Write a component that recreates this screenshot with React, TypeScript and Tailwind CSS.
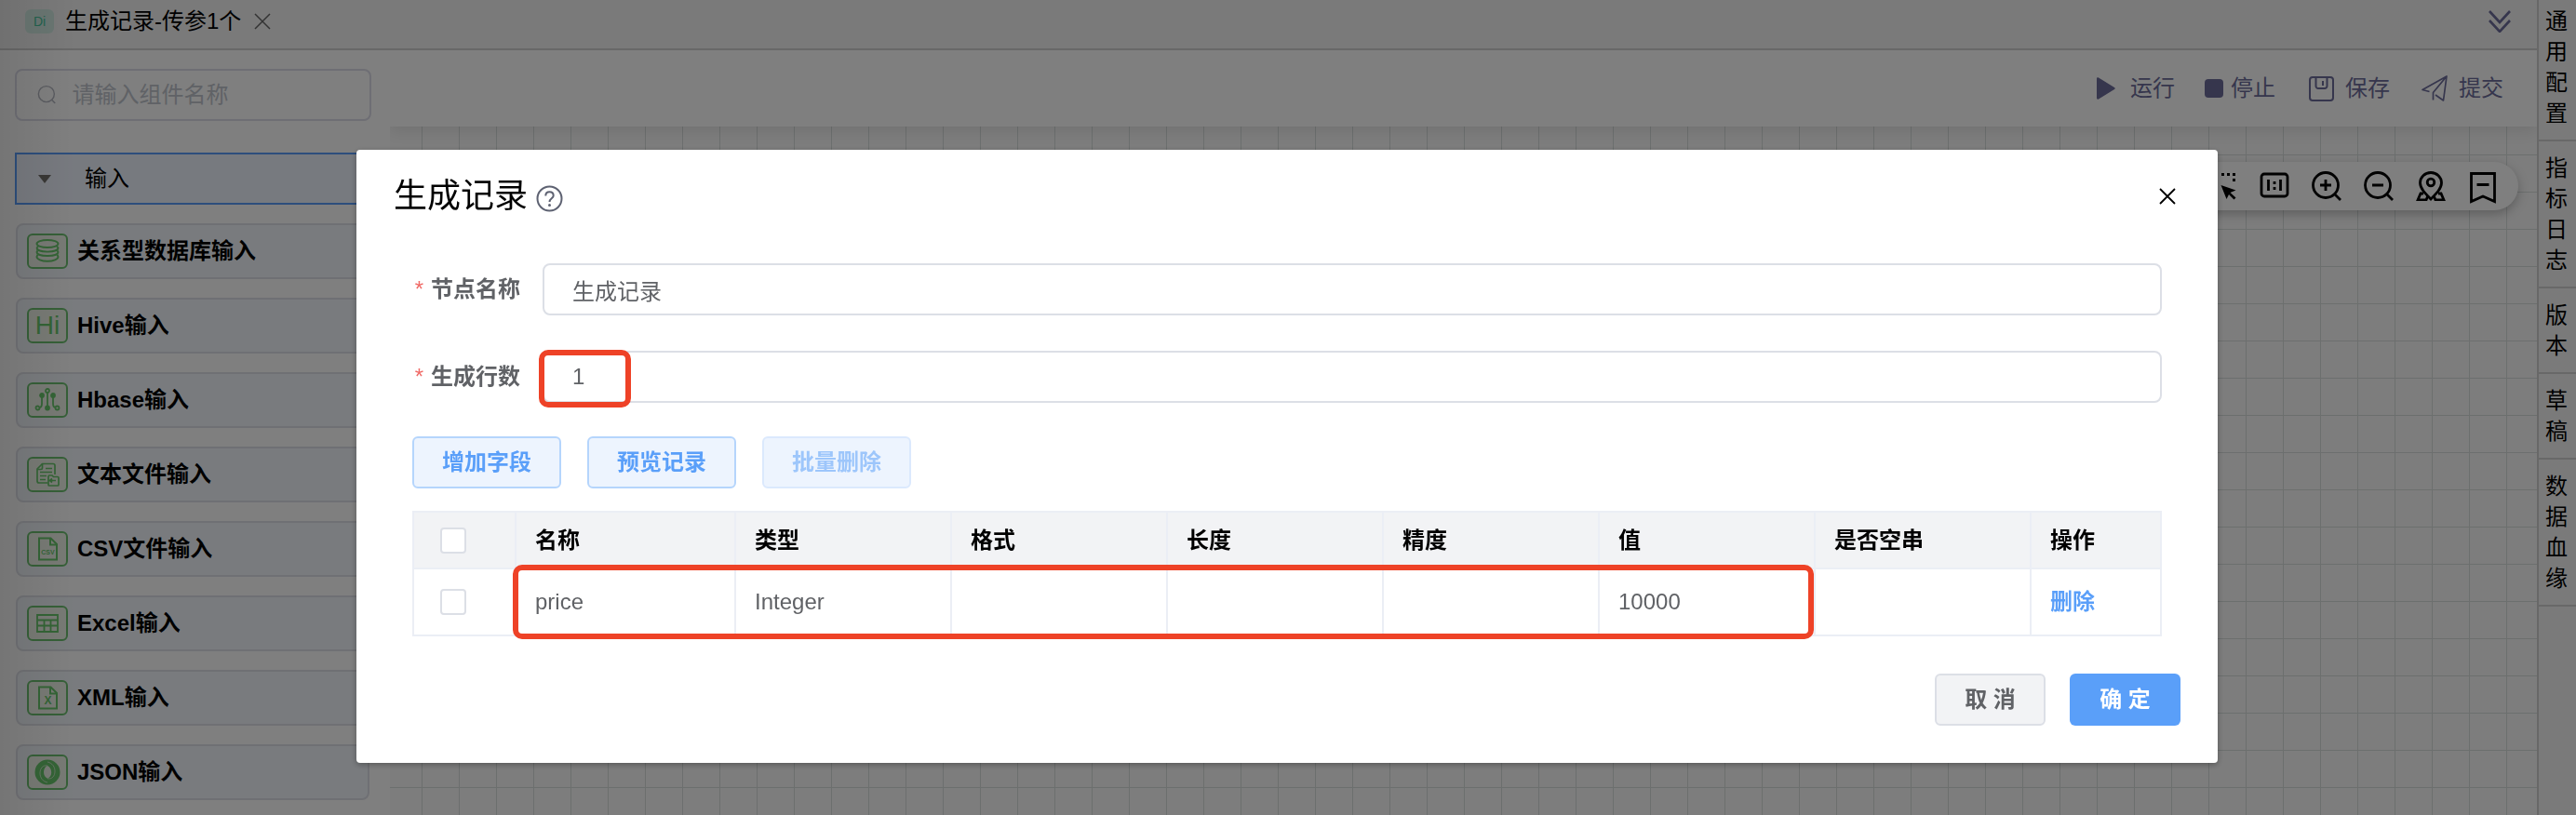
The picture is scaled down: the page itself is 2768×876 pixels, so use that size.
import type { ReactNode } from "react";
import { clsx } from "clsx";

const green = "#68c86c";

const DatabaseIcon = () => (
  <svg className="size-7" viewBox="0 0 28 28" fill="none" stroke={green} strokeWidth="1.9">
    <ellipse cx="14" cy="6" rx="11.5" ry="4" />
    <path d="M2.5 10.5C2.5 13 7.6 14.6 14 14.6S25.5 13 25.5 10.5L24 8.5M2.5 10.5L4 8.5" />
    <path d="M3.5 13.2L2.5 15C2.5 17.5 7.6 19 14 19S25.5 17.5 25.5 15L24.5 13.2" />
    <path d="M3.5 17.6L2.5 20C2.5 22.5 7.6 24.8 14 24.8S25.5 22.5 25.5 20L24.5 17.6" />
  </svg>
);

const HiveIcon = () => (
  <span className="text-[28px] leading-7 text-[#68c86c]">Hi</span>
);

const HbaseIcon = () => (
  <svg className="size-7" viewBox="0 0 28 28" fill="none" stroke={green} strokeWidth="1.8">
    <circle cx="14" cy="4" r="2" />
    <path d="M14 6v15M8 9v9c0 3-1 4-3 4M20 9v9c0 3 1 4 3 4" />
    <circle cx="8" cy="9" r="2" fill={green} />
    <circle cx="20" cy="9" r="2" fill={green} />
    <circle cx="14" cy="22.5" r="2" fill={green} />
    <circle cx="3.5" cy="22.5" r="2" />
    <circle cx="24.5" cy="22.5" r="2" />
  </svg>
);

const TextFileIcon = () => (
  <svg className="size-7" viewBox="0 0 28 28" fill="none" stroke={green} strokeWidth="1.7">
    <path d="M14 23H5a2 2 0 0 1-2-2V8l5.5-5.5H20a2 2 0 0 1 2 2V14" />
    <path d="M3 8.5h4a1.5 1.5 0 0 0 1.5-1.5V2.5" />
    <path d="M12 7.5h7M6 11.5h13M6 15.500h7M6 19.500h6" />
    <path d="M16 15h3l1.5 1.5H25a1 1 0 0 1 1 1V25a1 1 0 0 1-1 1H16a1 1 0 0 1-1-1V16a1 1 0 0 1 1-1Z" />
    <path d="M23 20.500h-6M19 18.500l-2.500 2 2.500 2" />
  </svg>
);

const FileIcon = ({ label, size }: { label: string; size: number }) => (
  <svg className="size-7" viewBox="0 0 28 28" fill="none" stroke={green} strokeWidth="2">
    <path d="M5 2.500h12.500L24 9v16.500H5Z" />
    <path d="M17 3v6.500h6.500" />
    <text
      x="14.5"
      y={size > 10 ? 21 : 19.5}
      fontSize={size}
      fontWeight="bold"
      textAnchor="middle"
      fill={green}
      stroke="none"
    >
      {label}
    </text>
  </svg>
);

const TableIcon = () => (
  <svg className="size-7" viewBox="0 0 28 28" fill="none" stroke={green} strokeWidth="1.8">
    <path d="M3 5h22v18H3ZM3 10.500h22M3 16.500h22M10.500 10.500V23M17.500 10.500V23" />
  </svg>
);

const JsonIcon = () => (
  <svg className="size-7" viewBox="0 0 28 28" fill={green}>
    <path
      fillRule="evenodd"
      d="M14 .5a13.500 13.500 0 1 0 0 27 13.500 13.500 0 0 0 0-27ZM14 7c2.800 1.500 4.200 4 4.200 7.200 0 3.200-1.500 5.600-4.200 6.600-2.600-1.300-4-3.700-4-6.800S11.400 8 14 7Z"
    />
    <path
      d="M14 7C9 6 6 10 6 15c0 5 3 9 8 10M14 20.800c5 1 8-2.800 8-7.800S19 4 14 3"
      fill="none"
      stroke="#eef4e6"
      strokeWidth=".7"
    />
  </svg>
);

const components: { name: string; icon: ReactNode }[] = [
  { name: "关系型数据库输入", icon: <DatabaseIcon /> },
  { name: "Hive输入", icon: <HiveIcon /> },
  { name: "Hbase输入", icon: <HbaseIcon /> },
  { name: "文本文件输入", icon: <TextFileIcon /> },
  { name: "CSV文件输入", icon: <FileIcon label="CSV" size={7} /> },
  { name: "Excel输入", icon: <TableIcon /> },
  { name: "XML输入", icon: <FileIcon label="X" size={12} /> },
  { name: "JSON输入", icon: <JsonIcon /> },
];

const sideTabs = ["通用配置", "指标日志", "版本", "草稿", "数据血缘"];

const columns = ["名称", "类型", "格式", "长度", "精度", "值", "是否空串"];

const rows = [["price", "Integer", "", "", "", "10000", ""]];

const TabBar = () => (
  <header className="flex h-[54px] items-center border-b-2 border-[#d0d0d0] bg-[#f4f4f4] pb-[6px] pl-[27px] pr-7">
    <span className="flex h-[26px] w-[31px] items-center justify-center rounded-md bg-[#d3ece4] text-sm text-[#46c49c]">
      Di
    </span>
    <h1 className="ml-3 text-2xl leading-8 text-black">生成记录-传参1个</h1>
    <button aria-label="关闭标签" className="ml-[14px]">
      <svg className="size-[18px]" viewBox="0 0 18 18" stroke="#666" strokeWidth="1.5">
        <path d="M1 1l16 16M17 1L1 17" />
      </svg>
    </button>
    <button aria-label="展开" className="ml-auto">
      <svg className="size-6" viewBox="0 0 24 24" fill="none" stroke="#6c6c9a" strokeWidth="2.6">
        <path d="M1 1l11 12L23 1M1 11l11 12 11-12" />
      </svg>
    </button>
  </header>
);

const ComponentPanel = () => (
  <aside className="w-[419px] shrink-0 bg-white pl-4 pr-5 pt-5">
    <label className="flex h-14 items-center gap-4 rounded-lg border-2 border-[#dcdce8] pl-[22px]">
      <svg className="size-6" viewBox="0 0 24 24" fill="none" stroke="#b4b6c0" strokeWidth="1.6">
        <circle cx="11" cy="11" r="9.5" />
        <path d="M17.5 18l4 4" />
      </svg>
      <input
        type="text"
        aria-label="组件名称"
        placeholder="请输入组件名称"
        className="w-full min-w-0 bg-transparent text-2xl leading-8 outline-none placeholder:text-[#c0c4cc]"
      />
    </label>
    <button className="mt-[34px] flex h-14 w-full items-center border-2 border-[#5a9cf8] bg-[#eff4ff] pl-[23px] text-2xl leading-8 text-black">
      <svg className="h-[9px] w-[14px]" viewBox="0 0 14 9" fill="#73706b">
        <path d="M0 0h14L7 9Z" />
      </svg>
      <span className="ml-9">输入</span>
    </button>
    <ul className="ml-px mr-0.5 mt-5 flex flex-col gap-5">
      {components.map((item) => (
        <li
          key={item.name}
          className="flex h-[60px] items-center gap-[10px] rounded-lg border-2 border-[#dfe1e8] bg-[#f2f7fc] pl-[10px]"
        >
          <span className="flex h-[38px] w-11 items-center justify-center rounded-md border-2 border-[#6cc070] bg-[#f0f5ea]">
            {item.icon}
          </span>
          <span className="text-2xl leading-8 font-bold text-black">{item.name}</span>
        </li>
      ))}
    </ul>
  </aside>
);

const ActionBar = () => (
  <div className="relative z-10 flex h-[82px] shrink-0 items-center justify-end bg-white pr-9 text-2xl leading-8 text-[#6c6c9a] shadow-[0_4px_16px_rgba(0,0,0,0.1)]">
    <button className="flex items-center gap-4">
      <svg className="h-6 w-5" viewBox="0 0 20 24" fill="currentColor">
        <path d="M0 1.500C0 .3 1 0 2 .6L19 11c1 .6 1 1.400 0 2L2 23.400c-1 .6-2 .3-2-.9Z" />
      </svg>
      运行
    </button>
    <button className="ml-8 flex items-center gap-2">
      <span className="size-5 rounded-sm bg-[#6c6c9a]" />
      停止
    </button>
    <button className="ml-9 flex items-center gap-3">
      <svg className="size-[27px]" viewBox="0 0 27 27" fill="none" stroke="currentColor" strokeWidth="2">
        <rect x="1" y="1" width="25" height="25" rx="3" />
        <path d="M7.500 1v9.500a2.500 2.500 0 0 0 2.500 2.500h7a2.500 2.500 0 0 0 2.500-2.500V1M15 5v5" />
      </svg>
      保存
    </button>
    <button className="ml-[34px] flex items-center gap-3">
      <svg className="size-7" viewBox="0 0 28 28" fill="none" stroke="currentColor" strokeWidth="1.7" strokeLinejoin="round">
        <path d="M8.500 17.500L1 15.500 27 1 23.500 27 15 21M27 1L12.500 18.500V26.500" />
      </svg>
      提交
    </button>
  </div>
);

const CanvasTools = () => (
  <div className="absolute right-5 top-[38px] flex h-[52px] items-center gap-6 rounded-full bg-white px-[22px] text-black shadow-[0_4px_12px_rgba(0,0,0,0.25)]">
    <button aria-label="框选">
      <svg className="size-8" viewBox="0 0 32 32" fill="currentColor">
        <path d="M2 2h3v3H2zM8 2h3v3H8zM15 2h3v3h-3zM21 2h3v3h-3zM27 2h3v3h-3zM27 8h3v3h-3zM2 8h3v3H2zM2 14h3v3H2z" />
        <path d="M14.500 15L30.500 20.500 24.500 23 30.500 28.500 28.500 30.500 23 25 20.500 30Z" />
      </svg>
    </button>
    <button aria-label="原始比例">
      <svg className="size-8" viewBox="0 0 32 32" fill="none" stroke="currentColor" strokeWidth="2.8">
        <rect x="2" y="3" width="28" height="24" rx="3" />
        <path d="M9.500 9v12M22.500 9v12M16 11v3M16 17v3" />
      </svg>
    </button>
    <button aria-label="放大">
      <svg className="size-8" viewBox="0 0 32 32" fill="none" stroke="currentColor" strokeWidth="2.8">
        <circle cx="15" cy="15" r="13.5" />
        <path d="M24.500 24.500L31 31M9 15h12M15 9v12" />
      </svg>
    </button>
    <button aria-label="缩小">
      <svg className="size-8" viewBox="0 0 32 32" fill="none" stroke="currentColor" strokeWidth="2.8">
        <circle cx="15" cy="15" r="13.5" />
        <path d="M24.500 24.500L31 31M9 15h12" />
      </svg>
    </button>
    <button aria-label="定位">
      <svg className="size-8" viewBox="0 0 32 32" fill="none" stroke="currentColor" strokeWidth="2.8">
        <path d="M16 30C10 24 4.500 18.500 4.500 12.500a11.500 11 0 0 1 23 0C27.500 18.500 22 24 16 30Z" />
        <circle cx="16" cy="12" r="3.8" />
        <path d="M8 24H5L2 31h9l2-5M24 24h3l3 7h-9l-2-5" />
      </svg>
    </button>
    <button aria-label="书签">
      <svg className="size-8 overflow-visible" viewBox="0 0 32 32" fill="none" stroke="currentColor" strokeWidth="2.8">
        <path d="M3.500 2.500h25V32.500L16 27 3.500 32.500ZM9.500 14.500h13" />
      </svg>
    </button>
  </div>
);

const SideTabs = () => (
  <nav className="w-[42px] shrink-0 border-l-2 border-[#d0d0d0] bg-[#f5f5f5]">
    {sideTabs.map((tab, i) => (
      <button
        key={tab}
        className={clsx(
          "block w-full border-b-2 border-[#d0d0d0] pb-3 pl-[6px] pr-2 text-2xl leading-[33px] break-all text-black",
          i === 0 ? "pt-[6px]" : "pt-3"
        )}
      >
        {tab}
      </button>
    ))}
  </nav>
);

interface FieldProps {
  id: string;
  label: string;
  value: string;
  marked?: boolean;
}

const Field = ({ id, label, value, marked }: FieldProps) => (
  <div className="flex items-center">
    <label htmlFor={id} className="w-[140px] shrink-0 pr-6 text-right text-2xl leading-8 font-bold whitespace-nowrap text-[#606266]">
      <span className="mr-2 font-normal text-[#f06a66]">*</span>
      {label}
    </label>
    <div className="relative flex-1">
      <input
        id={id}
        type="text"
        defaultValue={value}
        className="block h-14 w-full rounded-lg border-2 border-[#dcdfe6] bg-white px-[30px] text-2xl leading-8 text-[#606266] outline-none"
      />
      {marked && (
        <span className="pointer-events-none absolute -left-1 -top-px h-[62px] w-[99px] rounded-[10px] border-[6px] border-[#ee4227]" />
      )}
    </div>
  </div>
);

const Checkbox = ({ label }: { label: string }) => (
  <input
    type="checkbox"
    aria-label={label}
    className="block size-7 appearance-none rounded border-2 border-[#dcdfe6] bg-white"
  />
);

const RecordTable = () => (
  <div className="relative mt-6">
    <table className="w-full table-fixed border-separate border-spacing-0 border-l-2 border-t-2 border-[#ebeef5] text-left text-2xl leading-8">
      <colgroup>
        <col className="w-[110px]" />
        <col className="w-[236px]" />
        <col span={6} />
        <col className="w-[140px]" />
      </colgroup>
      <thead>
        <tr className="h-[61px] bg-[#f2f3f5] text-black">
          <th className="border-b-2 border-r-2 border-[#ebeef5] pl-7">
            <Checkbox label="全选" />
          </th>
          {columns.map((column) => (
            <th key={column} className="border-b-2 border-r-2 border-[#ebeef5] pl-5 font-bold">
              {column}
            </th>
          ))}
          <th className="border-b-2 border-r-2 border-[#ebeef5] pl-5 font-bold">操作</th>
        </tr>
      </thead>
      <tbody>
        {rows.map((row) => (
          <tr key={row[0]} className="h-[72px] text-[#606266]">
            <td className="border-b-2 border-r-2 border-[#ebeef5] pl-7">
              <Checkbox label={row[0]} />
            </td>
            {row.map((cell, i) => (
              <td key={columns[i]} className="border-b-2 border-r-2 border-[#ebeef5] pl-5">
                {cell}
              </td>
            ))}
            <td className="border-b-2 border-r-2 border-[#ebeef5] pl-5">
              <button className="font-bold text-[#5a9ff9]">删除</button>
            </td>
          </tr>
        ))}
      </tbody>
    </table>
    <span className="pointer-events-none absolute -bottom-[3px] left-[108px] right-[374px] h-20 rounded-[10px] border-[6px] border-[#ee4227]" />
  </div>
);

const RecordDialog = () => (
  <div
    role="dialog"
    aria-label="生成记录"
    className="w-[2000px] max-w-[92vw] rounded bg-white pb-10 shadow-[0_2px_6px_rgba(0,0,0,0.3)]"
  >
    <div className="flex items-center pl-10 pr-[45px] pt-[26px]">
      <h2 className="text-4xl leading-12 text-black">生成记录</h2>
      <button aria-label="帮助" className="ml-[9px] mt-1">
        <svg className="size-[29px]" viewBox="0 0 29 29" fill="none" stroke="#5e6272" strokeWidth="2">
          <circle cx="14.5" cy="14.5" r="13" />
          <path d="M10.300 11.500c0-2.500 1.800-4.200 4.200-4.200s4.200 1.600 4.200 3.900c0 3-4.200 3.300-4.200 6.800" />
          <circle cx="14.5" cy="21.5" r="1.5" fill="#5e6272" stroke="none" />
        </svg>
      </button>
      <button aria-label="关闭" className="ml-auto">
        <svg className="size-[18px]" viewBox="0 0 18 18" stroke="#000" strokeWidth="1.8">
          <path d="M1 1l16 16M17 1L1 17" />
        </svg>
      </button>
    </div>
    <div className="px-[60px] pt-12">
      <div className="flex flex-col gap-[38px]">
        <Field id="node-name" label="节点名称" value="生成记录" />
        <Field id="row-count" label="生成行数" value="1" marked />
      </div>
      <div className="mt-9 flex gap-7 text-2xl leading-8 font-bold">
        <button className="h-14 w-40 rounded-md border-2 border-[#b5d5fc] bg-[#edf4fe] text-[#5a9ff9]">
          增加字段
        </button>
        <button className="h-14 w-40 rounded-md border-2 border-[#b5d5fc] bg-[#edf4fe] text-[#5a9ff9]">
          预览记录
        </button>
        <button disabled className="h-14 w-40 rounded-md border-2 border-[#dbe9fd] bg-[#edf4fe] text-[#9dc6fb]">
          批量删除
        </button>
      </div>
      <RecordTable />
    </div>
    <div className="mt-10 flex justify-end gap-[26px] pr-10 text-2xl leading-8 font-bold">
      <button className="h-14 w-[119px] rounded-md border-2 border-[#dcdfe6] bg-[#f2f3f5] text-[#606266]">
        取 消
      </button>
      <button className="h-14 w-[119px] rounded-md bg-[#5a9ff9] text-white">确 定</button>
    </div>
  </div>
);

export default function App() {
  return (
    <div className="relative flex h-screen overflow-hidden bg-white font-['Liberation_Sans','Noto_Sans_CJK_SC',sans-serif]">
      <div className="flex min-w-0 flex-1 flex-col">
        <TabBar />
        <main className="flex min-h-0 flex-1">
          <ComponentPanel />
          <section className="flex min-w-0 flex-1 flex-col overflow-hidden">
            <ActionBar />
            <div className="relative flex-1 bg-[#fafafa] bg-[linear-gradient(to_right,#d8dedd_1px,transparent_1px),linear-gradient(to_bottom,#d8dedd_1px,transparent_1px)] bg-[length:40px_40px] bg-[position:34px_30px]">
              <CanvasTools />
            </div>
          </section>
        </main>
      </div>
      <SideTabs />
      <div className="pointer-events-none absolute inset-y-0 left-0 w-20 bg-linear-to-r from-black/8 to-transparent" />
      <div className="fixed inset-0 z-20 flex items-start justify-center bg-black/50 pr-0.5 pt-[161px]">
        <RecordDialog />
      </div>
    </div>
  );
}
